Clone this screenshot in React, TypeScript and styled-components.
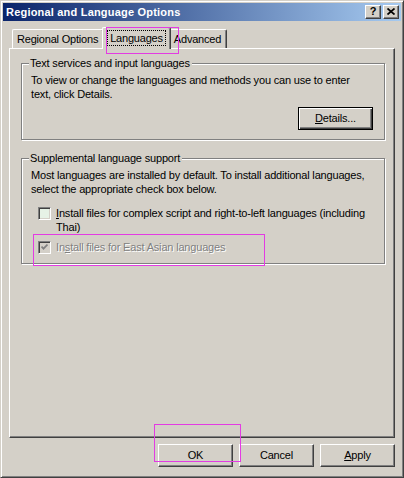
import React from 'react';
import styled, { createGlobalStyle } from 'styled-components';

const GlobalStyle = createGlobalStyle`
    html, body {
        margin: 0;
        padding: 0;
        background: #d4d0c8;
    }
    * {
        box-sizing: border-box;
    }
`;

const face = '#d4d0c8';
const font = `"Liberation Sans", Arial, sans-serif`;

export default function App() {
    return (
        <>
            <GlobalStyle />
            <Window>
                <TitleBar>
                    <Title>Regional and Language Options</Title>
                    <CaptionButtons>
                        <CaptionButton>?</CaptionButton>
                        <CaptionButton>
                            <svg width="8" height="7" viewBox="0 0 8 7">
                                <path d="M0.5 0.5 L7.5 6.5 M7.5 0.5 L0.5 6.5" stroke="#000" strokeWidth="1.7" />
                            </svg>
                        </CaptionButton>
                    </CaptionButtons>
                </TitleBar>

                <Body>
                    <TabRow>
                        <Tab>Regional Options</Tab>
                        <Tab $active>
                            <Focus>Languages</Focus>
                        </Tab>
                        <Tab>Advanced</Tab>
                    </TabRow>

                    <Panel>
                        <Group>
                            <Legend>Text services and input languages</Legend>
                            <Line>To view or change the languages and methods you can use to enter</Line>
                            <Line>text, click Details.</Line>
                            <ButtonRow>
                                <Button $default>
                                    <u>D</u>etails...
                                </Button>
                            </ButtonRow>
                        </Group>

                        <Group $second>
                            <Legend>Supplemental language support</Legend>
                            <Line>Most languages are installed by default. To install additional languages,</Line>
                            <Line>select the appropriate check box below.</Line>
                            <CheckRow $first>
                                <CheckBox $tint="#e6f2e6" />
                                <Label>
                                    <Line><u>I</u>nstall files for complex script and right-to-left languages (including</Line>
                                    <Line>Thai)</Line>
                                </Label>
                            </CheckRow>
                            <CheckRow>
                                <CheckBox $tint={face}>
                                    <svg width="7" height="7" viewBox="0 0 7 7">
                                        <path d="M0.5 2.5 L2.5 4.6 L6.5 0.6" fill="none" stroke="#808080" strokeWidth="1.8" />
                                    </svg>
                                </CheckBox>
                                <Label $disabled>
                                    <Line>In<u>s</u>tall files for East Asian languages</Line>
                                </Label>
                            </CheckRow>
                        </Group>
                    </Panel>

                    <Footer>
                        <Button>OK</Button>
                        <Button>Cancel</Button>
                        <Button>
                            <u>A</u>pply
                        </Button>
                    </Footer>
                </Body>

                <Mark style={{ left: 105, top: 26, width: 73, height: 27 }} />
                <Mark style={{ left: 32, top: 233, width: 232, height: 32 }} />
                <Mark style={{ left: 153, top: 423, width: 87, height: 38 }} />
            </Window>
        </>
    );
}

const Window = styled.div`
    position: relative;
    width: 404px;
    height: 478px;
    background: ${face};
    border: 1px solid;
    border-color: ${face} #404040 #404040 ${face};
    box-shadow: inset 1px 1px #fff, inset -1px -1px #808080;
    padding: 2px;
    font-family: ${font};
    font-size: 11px;
    letter-spacing: -0.18px;
    color: #000;
`;

const TitleBar = styled.div`
    height: 18px;
    display: flex;
    align-items: center;
    justify-content: space-between;
    padding: 0 2px 0 3px;
    background: linear-gradient(to right, #0a246a, #a6caf0);
`;

const Title = styled.span`
    color: #fff;
    font-weight: bold;
    font-size: 11px;
    letter-spacing: 0.2px;
`;

const CaptionButtons = styled.div`
    display: flex;
    gap: 2px;
`;

const CaptionButton = styled.div`
    width: 16px;
    height: 14px;
    display: flex;
    align-items: center;
    justify-content: center;
    background: ${face};
    border: 1px solid;
    border-color: #fff #404040 #404040 #fff;
    box-shadow: inset -1px -1px #808080;
    font-weight: bold;
    font-size: 11px;
    line-height: 1;
    padding-bottom: 1px;
`;

const Body = styled.div`
    padding: 6px 6px 0 6px;
`;

const TabRow = styled.div`
    display: flex;
    align-items: flex-end;
    height: 21px;
    padding-left: 3px;
    position: relative;
    z-index: 1;
`;

const Tab = styled.div<{ $active?: boolean }>`
    height: ${p => (p.$active ? '22px' : '19px')};
    margin: ${p => (p.$active ? '0 -2px -1px -2px' : '0')};
    padding: ${p => (p.$active ? '0 4px 2px 4px' : '0 5px 0 4px')};
    display: flex;
    align-items: center;
    background: ${face};
    border-top: 1px solid #fff;
    border-left: 1px solid #fff;
    border-right: 1px solid #404040;
    border-radius: 2px 2px 0 0;
    box-shadow: inset -1px 0 #808080;
    white-space: nowrap;
    letter-spacing: -0.2px;
    position: relative;
    z-index: ${p => (p.$active ? 2 : 1)};
`;

const Focus = styled.span`
    border: 1px dotted #000;
    padding: 1px 2px;
    line-height: 12px;
`;

const Panel = styled.div`
    height: 390px;
    border: 1px solid;
    border-color: #fff #404040 #404040 #fff;
    box-shadow: inset -1px -1px #808080;
    padding: 8px 9px 0 11px;
`;

const Group = styled.fieldset<{ $second?: boolean }>`
    margin: ${p => (p.$second ? '12px 0 0 0' : '0')};
    padding: 3px 10px 9px 9px;
    border: 1px solid #808080;
    box-shadow: inset 1px 1px #fff, 1px 1px #fff;
    min-width: 0;
`;

const Legend = styled.legend`
    padding: 0 2px 0 1px;
    margin-left: -2px;
    line-height: 13px;
    background: ${face};
`;

const Line = styled.div`
    line-height: 14px;
    white-space: nowrap;
`;

const ButtonRow = styled.div`
    display: flex;
    justify-content: flex-end;
    margin-top: 6px;
    padding-right: 1px;
`;

const Button = styled.div<{ $default?: boolean }>`
    width: 75px;
    height: 23px;
    display: flex;
    align-items: center;
    justify-content: center;
    background: ${face};
    border: 1px solid;
    border-color: ${p => (p.$default ? '#000' : '#fff #404040 #404040 #fff')};
    box-shadow: ${p =>
        p.$default
            ? 'inset 1px 1px #fff, inset -1px -1px #404040, inset -2px -2px #808080'
            : 'inset -1px -1px #808080'};
    padding-bottom: 1px;
`;

const CheckRow = styled.div<{ $first?: boolean }>`
    display: flex;
    align-items: flex-start;
    gap: 5px;
    margin-top: ${p => (p.$first ? '10px' : '6px')};
    padding-left: 7px;
`;

const CheckBox = styled.div<{ $tint: string }>`
    flex: none;
    width: 13px;
    height: 13px;
    margin-top: 1px;
    display: flex;
    align-items: center;
    justify-content: center;
    background: ${p => p.$tint};
    border: 1px solid;
    border-color: #808080 #fff #fff #808080;
    box-shadow: inset 1px 1px #404040, inset -1px -1px ${face};
`;

const Label = styled.div<{ $disabled?: boolean }>`
    color: ${p => (p.$disabled ? '#808080' : '#000')};
    text-shadow: ${p => (p.$disabled ? '1px 1px #fff' : 'none')};
`;

const Footer = styled.div`
    display: flex;
    justify-content: flex-end;
    gap: 6px;
    margin-top: 6px;
`;

const Mark = styled.div`
    position: absolute;
    border: 1px solid #e33be3;
    pointer-events: none;
    z-index: 5;
`;
